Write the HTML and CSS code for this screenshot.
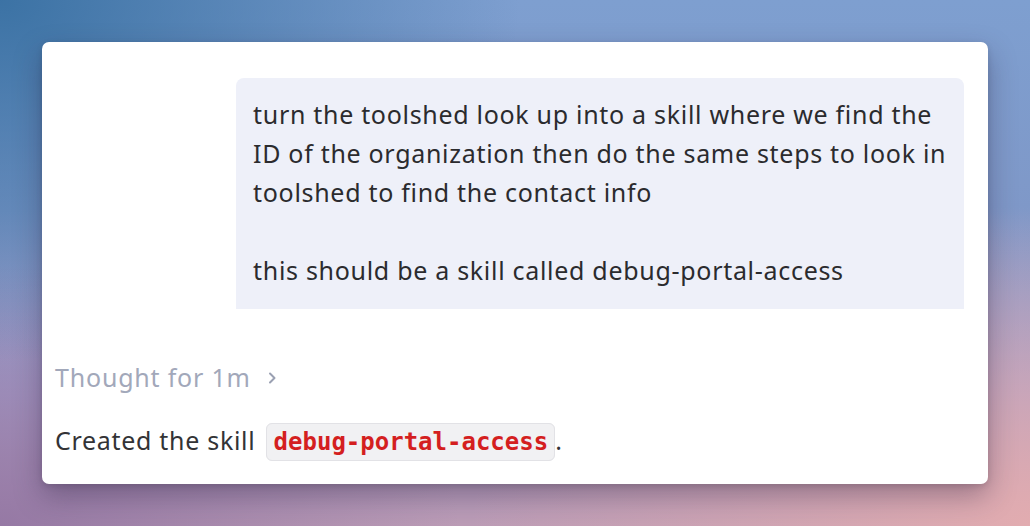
FILE: index.html
```html
<!DOCTYPE html>
<html>
<head>
<meta charset="utf-8">
<link rel="stylesheet" href="styles.css">
</head>
<body>
<div class="card">
  <div class="user-row">
    <div class="bubble">
      <p>turn the toolshed look up into a skill where we find the ID of the organization then do the same steps to look in toolshed to find the contact info</p>
      <p>this should be a skill called debug-portal-access</p>
    </div>
  </div>
  <div class="thought">
    <span>Thought for 1m</span>
    <svg class="chev" width="16" height="16" viewBox="0 0 16 16"><path d="M6 3.5l4.5 4.5-4.5 4.5" fill="none" stroke="currentColor" stroke-width="2" stroke-linecap="round" stroke-linejoin="round"/></svg>
  </div>
  <p class="reply">Created the skill <code>debug-portal-access</code>.</p>
</div>
</body>
</html>
```

FILE: styles.css
```css
html, body {
  margin: 0;
  height: 100%;
}
body {
  width: 1030px;
  height: 526px;
  overflow: hidden;
  box-sizing: border-box;
  padding: 42px;
  font-family: "Noto Sans", "Open Sans", sans-serif;
  background:
    radial-gradient(ellipse 520px 360px at 0% 0%, rgba(56,112,162,0.95), rgba(56,112,162,0) 100%),
    radial-gradient(ellipse 560px 320px at 100% 100%, rgba(226,172,176,1), rgba(226,172,176,0) 100%),
    radial-gradient(ellipse 460px 260px at 0% 100%, rgba(140,112,160,0.8), rgba(140,112,160,0) 100%),
    linear-gradient(180deg, #7e9fd0 0%, #7f98c8 40%, #a69cc6 75%, #bc9cb6 100%);
}
.card {
  background: #fff;
  border-radius: 7px;
  height: 442px;
  box-sizing: border-box;
  padding: 36px 24px 0 13px;
  box-shadow: 0 12px 28px rgba(40, 30, 60, 0.35), 0 2px 6px rgba(0,0,0,0.12);
  display: flex;
  flex-direction: column;
}
.user-row {
  display: flex;
  justify-content: flex-end;
}
.bubble {
  width: 728px;
  box-sizing: border-box;
  background: #eef0f9;
  border-radius: 8px 8px 0 0;
  padding: 17px 4px 19px 17px;
  color: #2b2b2e;
  font-size: 25px;
  line-height: 39px;
  letter-spacing: 0.7px;
}
.bubble p {
  margin: 0;
}
.bubble p + p {
  margin-top: 39px;
}
.thought {
  margin-top: 50px;
  display: flex;
  align-items: center;
  gap: 13px;
  color: #a2a8ba;
  font-size: 25px;
  line-height: 36px;
  letter-spacing: 0.8px;
}
.chev {
  color: #9aa0b2;
  margin-top: 2px;
}
.reply {
  margin: 26px 0 0;
  color: #333336;
  font-size: 25px;
  line-height: 38px;
  letter-spacing: 0.7px;
}
.reply code {
  font-family: "DejaVu Sans Mono", "Liberation Mono", monospace;
  font-weight: bold;
  font-size: 24px;
  letter-spacing: 0;
  color: #d41f1f;
  background: #f1f1f3;
  border: 1px solid #e2e2e6;
  border-radius: 6px;
  padding: 4px 6px 4px 7px;
  margin-left: 3px;
}
```
